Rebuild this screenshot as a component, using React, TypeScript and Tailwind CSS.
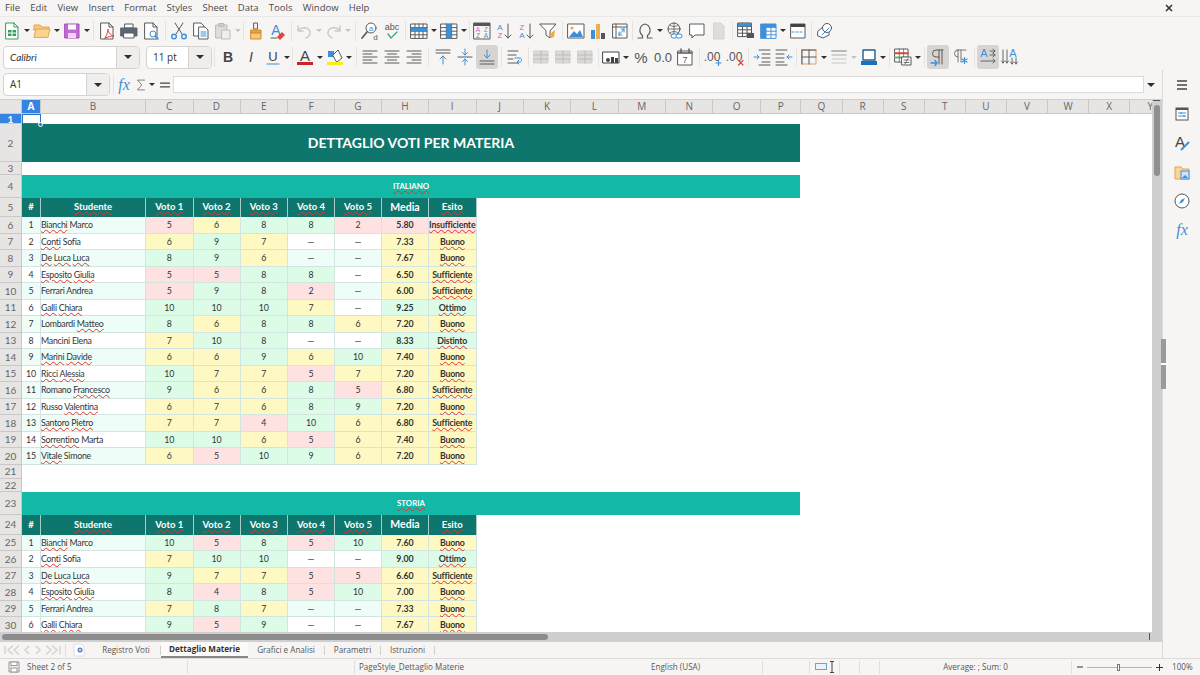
import React from 'react';

const colWidths = [19, 105, 47.5, 47, 47.5, 47, 47, 47, 47.5];
const headWidths = colWidths;
const extraCols: [string, number][] = [
  ['J', 47.4], ['K', 47.4], ['L', 47.4], ['M', 47.4], ['N', 47.4], ['O', 47.4], ['P', 40.6], ['Q', 41.1], ['R', 41.1], ['S', 41.1],
  ['T', 41.1], ['U', 41.1], ['V', 41.1], ['W', 41.1], ['X', 41.1], ['Y', 41],
];
const headLetters = ['A', 'B', 'C', 'D', 'E', 'F', 'G', 'H', 'I'];

type Student = [string, (number | null)[], string, string];

const italiano: Student[] = [
  ['*Bianchi Marco', [5, 6, 8, 8, 2], '5.80', 'Insufficiente'],
  ['*Conti Sofia', [6, 9, 7, null, null], '7.33', 'Buono'],
  ['*De *Luca *Luca', [8, 9, 6, null, null], '7.67', 'Buono'],
  ['*Esposito *Giulia', [5, 5, 8, 8, null], '6.50', 'Sufficiente'],
  ['Ferrari Andrea', [5, 9, 8, 2, null], '6.00', 'Sufficiente'],
  ['*Galli *Chiara', [10, 10, 10, 7, null], '9.25', 'Ottimo'],
  ['Lombardi *Matteo', [8, 6, 8, 8, 6], '7.20', 'Buono'],
  ['Mancini Elena', [7, 10, 8, null, null], '8.33', 'Distinto'],
  ['*Marini *Davide', [6, 6, 9, 6, 10], '7.40', 'Buono'],
  ['*Ricci *Alessia', [10, 7, 7, 5, 7], '7.20', 'Buono'],
  ['Romano *Francesco', [9, 6, 6, 8, 5], '6.80', 'Sufficiente'],
  ['Russo *Valentina', [6, 7, 6, 8, 9], '7.20', 'Buono'],
  ['*Santoro *Pietro', [7, 7, 4, 10, 6], '6.80', 'Sufficiente'],
  ['*Sorrentino Marta', [10, 10, 6, 5, 6], '7.40', 'Buono'],
  ['*Vitale Simone', [6, 5, 10, 9, 6], '7.20', 'Buono'],
];

const storia: Student[] = [
  ['*Bianchi Marco', [10, 5, 8, 5, 10], '7.60', 'Buono'],
  ['*Conti Sofia', [7, 10, 10, null, null], '9.00', 'Ottimo'],
  ['*De *Luca *Luca', [9, 7, 7, 5, 5], '6.60', 'Sufficiente'],
  ['*Esposito *Giulia', [8, 4, 8, 5, 10], '7.00', 'Buono'],
  ['Ferrari Andrea', [7, 8, 7, null, null], '7.33', 'Buono'],
  ['*Galli *Chiara', [9, 5, 9, null, null], '7.67', 'Buono'],
];

const tone = (v: number) => (v >= 8 ? 'bg-[#dcfce7]' : v >= 6 ? 'bg-[#fef9c3]' : 'bg-[#fee2e2]');

function Wavy({ children }: { children: React.ReactNode }) {
  return <span className="underline decoration-wavy decoration-[#e0352b] decoration-[0.7px] underline-offset-[0.5px]">{children}</span>;
}

function Name({ text }: { text: string }) {
  const words = text.split(' ');
  return (
    <>
      {words.map((w, i) => (
        <React.Fragment key={i}>
          {i > 0 && ' '}
          {w[0] === '*' ? <Wavy>{w.slice(1)}</Wavy> : w}
        </React.Fragment>
      ))}
    </>
  );
}

function RowLabel({ n, active }: { n: number; active?: boolean }) {
  return (
    <div
      className={
        'w-[22px] h-full shrink-0 flex items-center justify-center text-[10px] leading-none border-b border-r border-[#c9c8c6] ' +
        (active ? 'bg-[#3584e4] text-white font-bold' : 'bg-[#e6e5e3] text-[#666]')
      }
    >
      {n}
    </div>
  );
}

function Row({ n, h, children, active }: { n: number; h: string; children?: React.ReactNode; active?: boolean }) {
  return (
    <div className={'flex shrink-0 ' + h}>
      <RowLabel n={n} active={active} />
      {children}
    </div>
  );
}

function Band({ label }: { label: string }) {
  return (
    <div className="w-[778px] h-full bg-[#14b8a6] flex items-center justify-center text-white font-bold text-[7.8px]">
      <Wavy>{label}</Wavy>
    </div>
  );
}

function HeadRow({ n, h }: { n: number; h: string }) {
  const labels = ['#', 'Studente', 'Voto 1', 'Voto 2', 'Voto 3', 'Voto 4', 'Voto 5', 'Media', 'Esito'];
  return (
    <Row n={n} h={h}>
      {labels.map((l, i) => (
        <div
          key={l}
          style={{ width: headWidths[i] }}
          className="h-full bg-[#0f766e] border-r border-[#a5cdc8] flex items-center justify-center text-white font-bold text-[9.5px]"
        >
          {l === '#' || l === 'Media' ? <span className={l === 'Media' ? 'text-[10.5px]' : ''}>{l}</span> : <Wavy>{l}</Wavy>}
        </div>
      ))}
    </Row>
  );
}

function StudentRow({ s, i, n }: { s: Student; i: number; n: number }) {
  const stripe = i % 2 === 0 ? 'bg-[#effdf9]' : 'bg-white';
  const avg = parseFloat(s[2]);
  const line = 'border-r border-b border-[#d3e5e1]';
  return (
    <Row n={n} h="h-[16.5px]">
      <div style={{ width: colWidths[0] }} className={`${stripe} ${line} flex items-center justify-center`}>{i + 1}</div>
      <div style={{ width: colWidths[1] }} className={`${stripe} ${line} flex items-center whitespace-nowrap tracking-[-0.25px]`}>
        <span><Name text={s[0]} /></span>
      </div>
      {s[1].map((v, k) => (
        <div
          key={k}
          style={{ width: colWidths[k + 2] }}
          className={`${v === null ? stripe : tone(v)} ${line} flex items-center justify-center`}
        >
          {v === null ? '—' : v}
        </div>
      ))}
      <div style={{ width: colWidths[7] }} className={`${tone(avg)} ${line} flex items-center justify-center font-bold`}>{s[2]}</div>
      <div style={{ width: colWidths[8] }} className={`${tone(avg)} ${line} flex items-center justify-center font-bold whitespace-nowrap tracking-[-0.2px]`}>
        <Wavy>{s[3]}</Wavy>
      </div>
    </Row>
  );
}

/* toolbar helpers */
function Ic({ children, active, w }: { children: React.ReactNode; active?: boolean; w?: string }) {
  return (
    <div className={'h-[24px] shrink-0 flex items-center justify-center rounded-[3px] ' + (w ?? 'w-[22px]') + (active ? ' bg-[#d6d5d3]' : '')}>
      <svg width="20" height="20" viewBox="0 0 20 20" fill="none" strokeWidth="1" strokeLinecap="round" strokeLinejoin="round">
        {children}
      </svg>
    </div>
  );
}
function Ar({ off }: { off?: boolean }) {
  return (
    <div className="w-[8px] shrink-0 flex items-center justify-center">
      <div className={'w-0 h-0 border-l-[3px] border-r-[3px] border-t-[3px] border-l-transparent border-r-transparent ' + (off ? 'border-t-[#c4c4c4]' : 'border-t-[#2e2e2e]')} />
    </div>
  );
}
function Sp({ w }: { w?: string }) {
  return (
    <div className={'shrink-0 flex justify-center ' + (w ?? 'w-[5px]')}>
      <div className="w-px h-[20px] bg-[#e4e3e1]" />
    </div>
  );
}
function Combo({ w, bw, text, italic }: { w: string; bw: string; text: string; italic?: boolean }) {
  return (
    <div className={'h-[23px] shrink-0 flex rounded-[4px] border border-[#d5d4d2] bg-white overflow-hidden ' + w}>
      <div className={'flex-1 flex items-center pl-[6px] text-[10px] text-[#333] ' + (italic ? 'italic [font-family:Lato,sans-serif]' : '')}>{text}</div>
      <div className={'h-full bg-[#efeeec] border-l border-[#d5d4d2] flex items-center justify-center ' + bw}>
        <div className="w-0 h-0 border-l-[4px] border-r-[4px] border-t-[4px] border-l-transparent border-r-transparent border-t-[#2e2e2e]" />
      </div>
    </div>
  );
}

const D = '#5a5a5a';
const B = '#3d8fd8';
const L = '#c9c9c9';
const Lines = ({ kind }: { kind: 'l' | 'c' | 'r' }) => (
  <>
    {[4, 7, 10, 13, 16].map((y, i) => {
      const short = i % 2 === 1;
      const w = short ? 9 : 14;
      const x = kind === 'l' ? 3 : kind === 'r' ? 17 - w : 10 - w / 2;
      return <path key={y} d={`M${x} ${y}h${w}`} stroke={D} />;
    })}
  </>
);
const Grid = ({ c = D, x = 2, y = 3, cols = 3, rows = 3, cw = 5.3, rh = 4.6 }: { c?: string; x?: number; y?: number; cols?: number; rows?: number; cw?: number; rh?: number }) => (
  <g stroke={c}>
    <rect x={x} y={y} width={cols * cw} height={rows * rh} fill="#fff" />
    {Array.from({ length: cols - 1 }).map((_, i) => <path key={i} d={`M${x + (i + 1) * cw} ${y}v${rows * rh}`} />)}
    {Array.from({ length: rows - 1 }).map((_, i) => <path key={i} d={`M${x} ${y + (i + 1) * rh}h${cols * cw}`} />)}
  </g>
);
const Doc = ({ c = D }: { c?: string }) => <path d="M4 2h8l4 4v12H4z M12 2v4h4" stroke={c} fill="#fff" />;
const IT = ({ x, y, s, c, children, b, i }: { x: number; y: number; s: number; c: string; children: string; b?: boolean; i?: boolean }) => (
  <text x={x} y={y} fontSize={s} fill={c} fontWeight={b ? 700 : 400} fontStyle={i ? 'italic' : 'normal'} fontFamily="Liberation Sans, sans-serif" textAnchor="middle">{children}</text>
);

function Row1() {
  return (
    <div className="h-[27px] flex items-center pl-[1px]">
      <Ic><path d="M4 2h8l4 4v12H4z" stroke="#2f9e5f" fill="#fff" /><path d="M12 2v4h4" stroke="#2f9e5f" /><rect x="6" y="9" width="8" height="6" fill="#2f9e5f" /><path d="M10 9v6M6 12h8" stroke="#fff" /></Ic><Ar />
      <Ic><path d="M2 6V4h6l2 2h7v3H2z" fill="#f6c97f" stroke="#e5a44d" /><path d="M2 16l2-8h14l-2 8z" fill="#fbd58f" stroke="#e5a44d" /></Ic><Ar />
      <Ic><path d="M3 3h14v14H3z" fill="#c06bd0" stroke="#a64fb8" /><rect x="6" y="3.5" width="8" height="5" fill="#fff" /><rect x="6" y="12" width="8" height="5" fill="#f0d6f4" /></Ic><Ar />
      <Sp />
      <Ic><Doc /><path d="M8 17c2-3 3-7 3-9 0 3 2 6 6 7-3 0-6 1-9 2z" stroke="#d8433a" /></Ic>
      <Ic><rect x="6" y="3" width="8" height="4" stroke={D} fill="#fff" /><path d="M2 7h16v8H2z" fill="#5b6670" stroke="#5b6670" /><rect x="5" y="12" width="10" height="5" fill="#fff" stroke={D} /></Ic>
      <Ic><Doc /><circle cx="12" cy="13" r="3" stroke={B} fill="#fff" /><path d="M14 15l3 3" stroke={B} strokeWidth="1.6" /></Ic>
      <Sp w="w-[6px]" />
      <Ic><path d="M6 2l7 11M14 2L7 13" stroke={D} /><circle cx="5" cy="15.5" r="2.3" stroke={B} strokeWidth="1.4" /><circle cx="15" cy="15.5" r="2.3" stroke={B} strokeWidth="1.4" /></Ic>
      <Ic><path d="M3 2h7l3 3v10H3z" stroke={D} fill="#fff" /><path d="M8 6h6l3 3v9H8z" stroke={D} fill="#fff" /><path d="M10 11h5M10 13h5M10 15h5" stroke={B} /></Ic>
      <Ic><path d="M3 4h11v13H3z" fill="#ddd" stroke="#bbb" /><rect x="6" y="2.5" width="5" height="3" fill="#ccc" stroke="#bbb" /><path d="M9 9h8v9H9z" fill="#eee" stroke="#bbb" /></Ic><Ar off />
      <Sp w="w-[3px]" />
      <Ic><rect x="8" y="2" width="3.5" height="6" stroke="#6b5b45" /><path d="M5 9h10v3H5z" fill="#e9a13f" stroke="#d28a2c" /><path d="M5 12h10v6H5z" fill="#f4c77f" stroke="#d28a2c" /></Ic>
      <Ic><IT x={8} y={14} s={14} c={B}>A</IT><path d="M9 16l5-5 3 3-5 5z" fill="#e2463b" /><path d="M3 17h6" stroke={D} /></Ic>
      <Sp w="w-[4px]" />
      <Ic><path d="M4 5v5h5M4 10c3-5 11-4 12 1 .5 3-2 5-4 6" stroke={L} strokeWidth="1.4" /></Ic><Ar off />
      <Ic w="w-[21px]"><path d="M16 5v5h-5M16 10c-3-5-11-4-12 1-.5 3 2 5 4 6" stroke={L} strokeWidth="1.4" /></Ic><Ar off />
      <Sp w="w-[7px]" />
      <Ic><circle cx="11" cy="7" r="5" stroke={D} fill="#fff" /><path d="M7 11l-5 6" stroke={D} strokeWidth="1.7" /><IT x={11} y={10} s={8} c={B}>a</IT><IT x={15.5} y={19} s={8} c={D}>d</IT></Ic>
      <Ic><IT x={10} y={9} s={9} c="#555">abc</IT><path d="M6 13l3 4 6-6" stroke="#3fae7a" strokeWidth="1.4" /></Ic>
      <Sp w="w-[5px]" />
      <Ic><Grid c={D} rows={4} cols={4} cw={4} rh={3.6} /><rect x="2" y="6.6" width="16" height="3.6" fill={B} /></Ic><Ar />
      <Ic><Grid c={D} rows={4} cols={3} cw={5.3} rh={3.6} /><rect x="7.3" y="3" width="5.3" height="14.4" fill={B} /></Ic><Ar />
      <Sp w="w-[3px]" />
      <Ic><rect x="2" y="2" width="16" height="3" fill="#555" /><rect x="2" y="2" width="16" height="16" stroke={D} /><IT x={6} y={11} s={6.5} c="#d060c8">A</IT><IT x={6} y={17} s={6.5} c={B}>Z</IT><IT x={14} y={11} s={6.5} c="#d060c8">Z</IT><IT x={14} y={17} s={6.5} c={B}>A</IT></Ic>
      <Ic><IT x={6} y={9} s={8} c={B}>A</IT><IT x={6} y={17} s={8} c="#d060c8">Z</IT><path d="M14 3v14M11 14l3 3 3-3" stroke={D} /></Ic>
      <Ic><IT x={6} y={9} s={8} c="#d060c8">Z</IT><IT x={6} y={17} s={8} c={B}>A</IT><path d="M14 3v14M11 14l3 3 3-3" stroke={D} /></Ic>
      <Ic><path d="M2 3h16l-6 7v7l-4-3v-4z" stroke={D} fill="#fff" /><path d="M12 13l5-4-1 7-3 1z" fill="#eeaa3c" /></Ic>
      <Sp w="w-[6px]" />
      <Ic><rect x="2" y="3" width="16" height="14" stroke={D} fill="#fff" /><path d="M3 16l5-6 3 3 3-4 3 7z" fill={B} /><circle cx="6" cy="7" r="1.6" fill="#eeaa3c" /></Ic>
      <Ic><rect x="3" y="9" width="4" height="9" fill={B} /><rect x="8" y="3" width="4" height="15" fill="#eeb04e" /><rect x="13" y="12" width="4" height="6" fill="#555" /></Ic>
      <Ic><rect x="3" y="3" width="14" height="14" stroke={D} fill="#fff" /><path d="M3 6h14M6 3v14" stroke={D} /><path d="M9 14l5-6M14 8v3M14 8h-3M9 14h3M9 14v-3" stroke={B} /></Ic>
      <Sp w="w-[3px]" />
      <Ic><path d="M3 17h4.5v-2.5A6.5 6.5 0 0 1 10 3a6.5 6.5 0 0 1 2.5 11.5V17H17" stroke={D} strokeWidth="1.2" /></Ic><Ar />
      <Ic><circle cx="9" cy="8" r="6" stroke={D} /><path d="M3 8h12M9 2v12M5 4c2 2 6 2 8 0M5 12c2-2 6-2 8 0" stroke={D} strokeWidth=".8" /><rect x="6" y="13" width="6" height="4" rx="2" stroke={B} fill="#fff" /><rect x="11" y="13" width="6" height="4" rx="2" stroke={B} fill="#fff" /></Ic>
      <Ic><path d="M3 3h14v11H8l-3 3v-3H3z" stroke={D} fill="#fff" /></Ic>
      <Ic><path d="M5 2h7l3 3v13H5z" fill="#dedddb" stroke="#d3d3d3" /></Ic>
      <Sp w="w-[5px]" />
      <Ic><Grid c="#555" rows={4} cols={3} cw={4.5} rh={3.4} x={2} y={2} /><rect x="2" y="2" width="13.5" height="3.4" fill={B} /><rect x="11" y="12" width="7" height="5" fill="#555" /></Ic>
      <Ic><Grid c="#4a94d5" rows={4} cols={3} cw={5} rh={3.6} x={3} y={3} /><rect x="3" y="3" width="15" height="3" fill="#3d8fd8" /><rect x="3" y="3" width="5" height="14" fill="#3d8fd8" /></Ic><Ar />
      <Ic w="w-[21px]"><rect x="3" y="3" width="14" height="14" stroke={D} fill="#fff" /><rect x="3" y="3" width="14" height="3" fill="#444" /><path d="M4 11h12" stroke={B} strokeDasharray="2 2" /></Ic>
      <Sp w="w-[6px]" />
      <Ic><path d="M3 10l5-4 6 1v7l-6 3-5-2z" stroke={D} fill="#fff" /><circle cx="12" cy="7" r="4.5" stroke={D} fill="#fff" /><path d="M7 14l7-7" stroke={B} /></Ic>
    </div>
  );
}

function Row2() {
  return (
    <div className="h-[26px] flex items-center pl-[3px]">
      <Combo w="w-[137px]" bw="w-[23px]" text="Calibri" italic />
      <div className="w-[6px]" />
      <Combo w="w-[66px]" bw="w-[23px]" text="11 pt" />
      <div className="w-[5px] flex justify-center"><div className="w-px h-[20px] bg-[#e4e3e1]" /></div>
      <Ic><IT x={10} y={15} s={14} c="#444" b>B</IT></Ic>
      <Ic w="w-[24px]"><IT x={10} y={15} s={14} c="#444" i>I</IT></Ic>
      <Ic w="w-[20px]"><IT x={10} y={14} s={13} c="#444">U</IT><path d="M4 17h12" stroke={B} strokeWidth="1.2" /></Ic><Ar />
      <Sp w="w-[2px]" />
      <Ic w="w-[23px]"><IT x={10} y={14} s={15} c="#444">A</IT><rect x="2" y="15" width="16" height="3" fill="#c9222a" /></Ic><Ar />
      <Ic w="w-[21px]"><path d="M3 4h6v6H3z" fill={B} /><path d="M8 8l5-5 4 8-5 4z" stroke={D} fill="#fff" /><rect x="2" y="15" width="16" height="3" fill="#f6ee1c" /></Ic><Ar />
      <Sp w="w-[6px]" />
      <Ic><Lines kind="l" /></Ic>
      <Ic><Lines kind="c" /></Ic>
      <Ic><Lines kind="r" /></Ic>
      <Sp w="w-[7px]" />
      <Ic><path d="M3 3h14M3 6h14" stroke={D} /><path d="M10 17V9M7 12l3-3 3 3" stroke={B} /></Ic>
      <Ic><path d="M3 10h14" stroke={D} /><path d="M10 2v6M7.500 5.500L10 8l2.500-2.500M10 18v-6M7.500 14.500L10 12l2.500 2.500" stroke={B} /></Ic>
      <Ic active><path d="M3 14h14M3 17h14" stroke={D} /><path d="M10 3v8M7 8l3 3 3-3" stroke={B} /></Ic>
      <Sp w="w-[6px]" />
      <Ic><path d="M3 4h10M3 8h8M3 12h5M3 16h10" stroke={D} /><path d="M10 11h5c2 0 2 4 0 4h-2M14 13l-2 2 2 2" stroke={B} /></Ic>
      <Sp w="w-[4px]" />
      {[0, 1, 2].map((k) => (
        <Ic key={k}><rect x="3" y="4" width="14" height="12" fill="#dbdad8" stroke="#cfcfcf" /><path d="M3 8h14M3 12h14M10 4v12" stroke="#bcbcbc" /></Ic>
      ))}
      <Sp w="w-[4px]" />
      <Ic><rect x="2" y="5" width="16" height="11" stroke="#444" fill="#fff" /><circle cx="7" cy="13" r="2" fill="#444" /><rect x="10" y="10" width="3" height="6" fill="#444" /><rect x="14" y="11" width="3" height="5" fill="#444" /></Ic><Ar />
      <Ic><IT x={10} y={16} s={15} c="#555">%</IT></Ic>
      <Ic><IT x={10} y={15} s={13} c="#555">0.0</IT></Ic>
      <Ic><rect x="3" y="4" width="14" height="14" stroke={D} fill="#fff" /><path d="M3 6h14M6 2v3M14 2v3" stroke={D} strokeWidth="1.4" /><IT x={10} y={16} s={9} c={D}>7</IT></Ic>
      <Sp w="w-[6px]" />
      <Ic><IT x={9} y={14} s={12} c="#555">.00</IT><path d="M13 16h5M15.500 13.500v5" stroke={B} strokeWidth="1.2" /></Ic>
      <Ic><IT x={9} y={14} s={12} c="#555">.00</IT><path d="M13.500 13.500l4.500 4.500M18 13.500l-4.500 4.500" stroke="#e2463b" strokeWidth="1.2" /></Ic>
      <Sp w="w-[5px]" />
      <Ic><path d="M7 3h11M10 7h8M10 11h8M10 15h8M7 18h11" stroke={D} /><path d="M2 10h5M5 8l2 2-2 2" stroke={B} /></Ic>
      <Ic><path d="M2 3h11M2 7h8M2 11h8M2 15h8M2 18h11" stroke={D} /><path d="M18 10h-5M15 8l-2 2 2 2" stroke={B} /></Ic>
      <Sp w="w-[3px]" />
      <Ic><path d="M3 3h14v14H3z" stroke="#e0a060" /><path d="M10 3v14M3 10h14" stroke={D} /><path d="M3 3h14M3 3v14" stroke={D} /></Ic><Ar />
      <Ic><path d="M3 4h14" stroke="#b9b9b9" strokeWidth="2" /><path d="M3 8h14" stroke="#c4c4c4" strokeWidth="1.5" /><path d="M3 12h14" stroke="#c4c4c4" /><path d="M3 16h14" stroke="#c4c4c4" strokeDasharray="2 1" /></Ic><Ar off />
      <Ic w="w-[21px]"><rect x="4" y="3" width="12" height="10" stroke="#1e5f99" fill="#fff" strokeWidth="1.400" /><rect x="2" y="14" width="16" height="4" fill="#1e6fb5" /></Ic><Ar />
      <Sp w="w-[5px]" />
      <Ic><rect x="2" y="2" width="13" height="13" fill="#fff" stroke={D} /><path d="M2 6.300h13" stroke="#e2463b" strokeWidth="2" /><path d="M2 10.600h13" stroke="#5db67a" strokeWidth="2" /><path d="M6.300 2v13M10.600 2v13" stroke={D} strokeWidth=".7" /><rect x="9" y="10" width="9" height="8" fill="#fff" stroke={D} /><path d="M11 13h5M11 15.500h5M15 11.500l-3 5.500" stroke={D} strokeWidth=".8" /></Ic><Ar />
      <Sp w="w-[5px]" />
      <Ic active><path d="M14 3v14M11 3v14M15 3h-7a3.500 3.500 0 0 0 0 7h3" stroke={D} /><path d="M3 16h6M7 13.500L9 16l-2 2.500" stroke={B} strokeWidth="1.400" /></Ic>
      <Ic><path d="M7 3h9M8 3v12M11 3v12M8 3a3.500 3.500 0 0 0 0 7" stroke="#777" /><path d="M12 15l5-3M12 12l5 3M14.500 10.500v6" stroke={B} strokeWidth="1.200" /></Ic>
      <Sp w="w-[6px]" />
      <Ic active><IT x={6} y={10} s={11} c={B}>A</IT><path d="M12 4h5M12 8h5M15 2l2 2-2 2M15 6l2 2-2 2M3 14h14M15 12l2 2-2 2" stroke={D} strokeWidth=".9" /></Ic>
      <Ic><IT x={13} y={10} s={11} c={B}>A</IT><path d="M3 3v13M1.500 14L3 16l1.500-2M7 3v13M5.500 14L7 16l1.500-2M12 11v6M10.500 15l1.500 2 1.500-2M16 11v6M14.500 15l1.500 2 1.500-2" stroke={D} strokeWidth=".9" /></Ic>
    </div>
  );
}

export default function App() {
  return (
    <div className="w-[1200px] h-[675px] overflow-hidden bg-[#f6f5f4] flex flex-col text-[#3d3d3d] [font-family:'Open_Sans',sans-serif]">
      {/* menu */}
      <div className="h-[17px] shrink-0 flex items-center pl-[5px] border-b border-[#e9e8e6] text-[9.5px] text-[#4a4a4a] relative">
        {['File', 'Edit', 'View', 'Insert', 'Format', 'Styles', 'Sheet', 'Data', 'Tools', 'Window', 'Help'].map((m) => (
          <span key={m} className="mr-[10.25px]">{m}</span>
        ))}
        <svg className="absolute right-[27px] top-[4px]" width="8" height="8" viewBox="0 0 8 8"><path d="M1 1l6 6M7 1L1 7" stroke="#333" strokeWidth="1.600" /></svg>
      </div>
      <Row1 />
      <Row2 />

      <div className="flex-1 min-h-0 flex">
        <div className="flex-1 min-w-0 flex flex-col">
          {/* formula bar */}
          <div className="h-[29px] shrink-0 flex items-center pl-[3px] pr-[4px]">
            <Combo w="w-[107px]" bw="w-[23px]" text="A1" />
            <div className="w-[4px] flex justify-end"><div className="w-px h-[20px] bg-[#e4e3e1]" /></div>
            <Ic w="w-[20px]"><text x="10" y="15" fontSize="16" fontStyle="italic" fontFamily="Liberation Serif, serif" textAnchor="middle" fill={B}>fx</text></Ic>
            <Ic w="w-[14px]"><path d="M15 3H5l6 7-6 7h10" stroke="#555" /></Ic>
            <Ar />
            <Ic w="w-[18px]"><path d="M5 8h10M5 12h10" stroke="#444" strokeWidth="1.400" /></Ic>
            <div className="flex-1 h-[17px] ml-[-1px] bg-white border border-[#dcdbd9]" />
            <div className="w-[14px] flex justify-center"><div className="w-0 h-0 border-l-[4px] border-r-[4px] border-t-[4px] border-l-transparent border-r-transparent border-t-[#2e2e2e]" /></div>
          </div>

          {/* sheet */}
          <div className="flex-1 min-h-0 flex">
            <div className="flex-1 min-w-0 flex flex-col">
              <div className="h-[15px] shrink-0 flex text-[10px] text-[#666] border-t border-[#d0cfcd] bg-[#e6e5e3] overflow-hidden">
                <div className="w-[22px] shrink-0 border-r border-b border-[#c9c8c6]" />
                {headLetters.map((c, i) => (
                  <div
                    key={c}
                    style={{ width: headWidths[i] }}
                    className={'shrink-0 flex items-center justify-center border-r border-b border-[#c9c8c6] ' + (i === 0 ? 'bg-[#3584e4] text-white font-bold' : '')}
                  >
                    {c}
                  </div>
                ))}
                {extraCols.map(([c, w]) => (
                  <div key={c} style={{ width: w }} className="shrink-0 flex items-center justify-center border-r border-b border-[#c9c8c6]">{c}</div>
                ))}
              </div>

              <div className="flex-1 min-h-0 overflow-hidden bg-white flex flex-col text-[8.8px] text-[#333] [font-family:Lato,sans-serif] relative">
                <Row n={1} h="h-[10px]" active>
                  <div className="w-[19px] h-full border border-[#2f73c4]" />
                </Row>
                <div className="absolute left-[38px] top-[8px] w-[5px] h-[5px] rounded-full bg-[#2f73c4] border border-white z-10" />
                <Row n={2} h="h-[38px]">
                  <div className="w-[778px] h-full bg-[#0f766e] flex items-center justify-center pb-[2px] text-white font-bold text-[14px]">DETTAGLIO VOTI PER MATERIA</div>
                </Row>
                <Row n={3} h="h-[13px]" />
                <Row n={4} h="h-[23px]"><Band label="ITALIANO" /></Row>
                <HeadRow n={5} h="h-[19px]" />
                {italiano.map((s, i) => <StudentRow key={i} s={s} i={i} n={6 + i} />)}
                <Row n={21} h="h-[14px]" />
                <Row n={22} h="h-[13.5px]" />
                <Row n={23} h="h-[23px]"><Band label="STORIA" /></Row>
                <HeadRow n={24} h="h-[19.5px]" />
                {storia.map((s, i) => <StudentRow key={i} s={s} i={i} n={25 + i} />)}
              </div>
            </div>

            {/* vertical scrollbar */}
            <div className="w-[10px] shrink-0 bg-[#cfcfcf] pt-[6px] px-[2px] relative">
              <div className="absolute left-[1px] top-[1px] w-[7px] h-px bg-[#555]" />
              <div className="h-[71px] rounded-full bg-[#8f8f8f]" />
            </div>
          </div>

          {/* horizontal scrollbar */}
          <div className="h-[10px] shrink-0 bg-[#cfcfcf] py-[2px] pl-[2px] relative">
            <div className="w-[546px] h-[6px] rounded-full bg-[#8c8c8c]" />
            <div className="absolute right-[12px] top-[1px] w-px h-[7px] bg-[#555]" />
          </div>

          {/* tabs */}
          <div className="h-[16px] shrink-0 flex items-center text-[8.1px] text-[#555]">
            <div className="w-[66px] flex items-center justify-center border-r border-[#dededc] h-[13px]">
              <svg width="60" height="12" viewBox="0 0 60 12" fill="none" stroke="#d4d3d1" strokeWidth="1.5">
                <path d="M2 2v8M10 1.500L5 6l5 4.500M16 1.500L11 6l5 4.500M26 2l-4 4 4 4M33 2l4 4-4 4M43 1.500L48 6l-5 4.500M49 1.500L54 6l-5 4.500M57 2v8" />
              </svg>
            </div>
            <div className="w-[26px] flex justify-center">
              <svg width="12" height="14" viewBox="0 0 12 14"><path d="M1 1h7l3 3v9H1z" fill="#fff" stroke="#ddd" /><circle cx="7" cy="7" r="2.500" fill="#3d74c8" /><path d="M5.500 7h3M7 5.500v3" stroke="#fff" strokeWidth=".8" /></svg>
            </div>
            <span className="w-[68px] text-center">Registro Voti</span>
            <div className="w-px h-[9px] bg-[#cfcecc]" />
            <div className="w-[87px] h-full bg-[#fbfbfa] border-b-2 border-[#888] flex items-center justify-center font-bold text-[#333] whitespace-nowrap">Dettaglio Materie</div>
            <span className="w-[76px] text-center whitespace-nowrap">Grafici e Analisi</span>
            <div className="w-px h-[9px] bg-[#cfcecc]" />
            <span className="w-[55px] text-center">Parametri</span>
            <div className="w-px h-[9px] bg-[#cfcecc]" />
            <span className="w-[53px] text-center">Istruzioni</span>
            <div className="w-px h-[9px] bg-[#cfcecc]" />
          </div>
        </div>

        {/* sidebar */}
        <div className="w-[38px] shrink-0 border-l border-[#dbdad8] flex flex-col items-center pt-[4px] gap-[7px] relative">
          <svg width="20" height="22" viewBox="0 0 20 20"><path d="M5 6h10M5 10h10M5 14h10" stroke="#444" strokeWidth="1.400" /></svg>
          <svg width="20" height="22" viewBox="0 0 20 20"><rect x="4" y="4" width="12" height="12" stroke="#555" fill="#fff" /><rect x="4" y="4" width="12" height="2" fill="#555" /><path d="M6 9h8M6 12h8M9 8v2M12 11v2" stroke={B} /></svg>
          <svg width="20" height="22" viewBox="0 0 20 20"><text x="8" y="14" fontSize="15" fill="#444" textAnchor="middle" fontFamily="Liberation Sans, sans-serif">A</text><path d="M9 17l8-8" stroke={B} strokeWidth="2" /></svg>
          <svg width="20" height="22" viewBox="0 0 20 20"><path d="M3 5h6l2 2h6v10H3z" fill="#f8d69b" stroke="#e6a64f" /><rect x="9" y="9" width="8" height="8" fill="#cfe3f5" stroke={B} /><path d="M10 16l3-3 3 3" fill={B} /></svg>
          <svg width="20" height="22" viewBox="0 0 20 20"><circle cx="10" cy="10" r="7" stroke="#555" fill="#fff" /><path d="M13 7l-2 4-4 2 2-4z" fill={B} /></svg>
          <svg width="20" height="22" viewBox="0 0 20 20"><text x="10" y="15" fontSize="16" fontStyle="italic" fontFamily="Liberation Serif, serif" textAnchor="middle" fill={B}>fx</text></svg>
          <div className="absolute left-[-2px] top-[269px] w-[5px] h-[50px] bg-[#9a9a9a]">
            <div className="mt-[24px] h-[2px] bg-white" />
          </div>
        </div>
      </div>

      {/* status bar */}
      <div className="h-[17px] shrink-0 border-t border-[#dbdad8] flex items-center text-[8.1px] text-[#555] relative">
        <div className="w-[27px] flex justify-center">
          <svg width="12" height="12" viewBox="0 0 12 12"><path d="M1 1h10v10H1z" stroke="#999" fill="#eee" /><rect x="3" y="1" width="6" height="3.500" stroke="#999" fill="#fff" /><rect x="3" y="7" width="6" height="4" stroke="#999" fill="#fff" /></svg>
        </div>
        <span className="w-[160px]">Sheet 2 of 5</span>
        <div className="w-px h-[13px] bg-[#e0dfdd]" />
        <div className="w-[166px]" />
        <div className="w-px h-[13px] bg-[#e0dfdd]" />
        <span className="w-[296px] pl-[4px] whitespace-nowrap">PageStyle_Dettaglio Materie</span>
        <span className="w-[111px] whitespace-nowrap">English (USA)</span>
        <div className="w-px h-[13px] bg-[#e0dfdd]" />
        <div className="w-[46px]" />
        <div className="w-px h-[13px] bg-[#e0dfdd]" />
        <div className="w-[29px] flex items-center pl-[5px]">
          <svg width="22" height="14" viewBox="0 0 22 14"><rect x=".5" y="3.500" width="11" height="6" stroke="#6aa5c8" fill="#eaf3f8" /><path d="M15 1.500h4M17 1.500v11M15 12.500h4" stroke="#444" /></svg>
        </div>
        <div className="w-px h-[13px] bg-[#e0dfdd]" />
        <div className="w-[19px]" />
        <div className="w-px h-[13px] bg-[#e0dfdd]" />
        <div className="w-[19px]" />
        <div className="w-px h-[13px] bg-[#e0dfdd]" />
        <span className="w-[191px] text-center whitespace-nowrap">Average: ; Sum: 0</span>
        <div className="w-px h-[13px] bg-[#e0dfdd]" />
        <div className="w-[95px] flex items-center pl-[4px] gap-[3px]">
          <svg width="8" height="8" viewBox="0 0 8 8"><path d="M1 4h6" stroke="#333" /></svg>
          <div className="w-[65px] h-px bg-[#b5b5b5] relative">
            <div className="absolute left-[30px] top-[-3px] w-[3px] h-[7px] border border-[#777] bg-white" />
          </div>
          <svg width="9" height="9" viewBox="0 0 9 9"><path d="M1 4.500h7M4.500 1v7" stroke="#333" /></svg>
        </div>
        <span className="pl-[5px]">100%</span>
      </div>
    </div>
  );
}
